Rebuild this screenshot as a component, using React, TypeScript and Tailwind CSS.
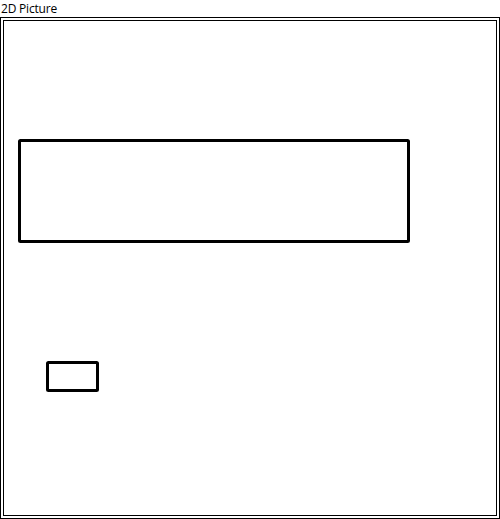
export default function App() {
  return (
    <div className="flex h-[519px] w-[500px] flex-col bg-white font-['Open_Sans','Noto_Sans',sans-serif] text-black">
      <div className="h-[17px] pl-[1px] pt-[1px] text-[12px] leading-[16px] tracking-[-0.2px]">2D Picture</div>
      <div className="flex flex-1 border border-black p-[2px]">
        <div className="flex-1 border border-black">
          <svg width="100%" height="100%" className="block">
            <rect x="15.5" y="119.5" width="389" height="101" rx="1" fill="none" stroke="#000" strokeWidth="3" />
            <rect x="43.5" y="341.5" width="50" height="28" rx="1" fill="none" stroke="#000" strokeWidth="3" />
          </svg>
        </div>
      </div>
    </div>
  )
}
